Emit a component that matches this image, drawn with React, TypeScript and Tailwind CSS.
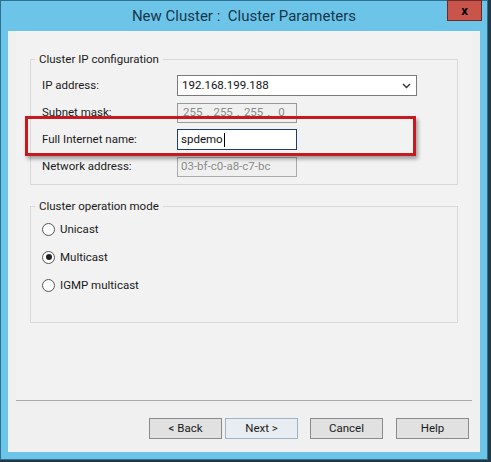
import React from 'react';

const font = { fontFamily: '"Segoe UI", Roboto, "Liberation Sans", sans-serif' };

function Field({ label, children }: { label: string; children: React.ReactNode }) {
  return (
    <div className="flex h-[27px] items-center">
      <span className="w-[135px] shrink-0 text-[11.5px] text-[#1a1a1a]">{label}</span>
      {children}
    </div>
  );
}

function Radio({ label, checked }: { label: string; checked?: boolean }) {
  return (
    <div className="flex h-[28px] items-center gap-[5px]">
      <span className="flex h-[13px] w-[13px] items-center justify-center rounded-full border border-[#555] bg-white">
        {checked && <span className="h-[6px] w-[6px] rounded-full bg-[#222]" />}
      </span>
      <span className="text-[11.5px] text-[#1a1a1a]">{label}</span>
    </div>
  );
}

function Btn({ label, focused }: { label: string; focused?: boolean }) {
  return (
    <button
      className={`h-[21px] w-[73px] border text-[11.5px] text-[#1a1a1a] ${
        focused ? 'border-[#9fb4c6] bg-[#e8edf2]' : 'border-[#8a8a8a] bg-[#e1e1e1]'
      }`}
    >
      {label}
    </button>
  );
}

export default function App() {
  return (
    <div style={font} className="h-[462px] w-[491px] bg-[#243845] pr-[3px] pb-[2px]">
      <div className="flex h-full flex-col border border-[#2f6f8f] bg-[#6cc4e9] px-[7px] pb-[7px]">
        {/* title bar */}
        <div className="relative flex h-[30px] shrink-0 items-center justify-center">
          <span className="text-[15px] text-[#17364a]">New Cluster :&nbsp; Cluster Parameters</span>
          <div className="absolute -top-px right-[-2px] flex h-[21px] w-[35px] items-center justify-center border border-[#6b2a24] bg-[#c9544a] text-[13px] font-bold text-black">
            x
          </div>
        </div>

        {/* client area */}
        <div className="flex flex-1 flex-col bg-[#f0f0f0]">
          <div className="mx-[8px] flex flex-col border-b border-[#a8a8a8] bg-[#f2f2f2] px-[14px] pt-[20px] pb-[77px]">
            <fieldset className="h-[134px] border border-[#d8d8d8] px-[11px]">
              <legend className="ml-[-7px] px-[4px] text-[11.5px] text-[#1a1a1a]">Cluster IP configuration</legend>
              <div className="mt-[4px] flex flex-col">
                <Field label="IP address:">
                  <div className="flex h-[21px] w-[240px] items-center justify-between border border-[#7a7a7a] bg-white pl-[4px] pr-[5px] text-[11.5px] text-[#111]">
                    <span>192.168.199.188</span>
                    <svg width="9" height="6" viewBox="0 0 9 6">
                      <path d="M1 1 L4.5 4.5 L8 1" fill="none" stroke="#333" strokeWidth="1.4" />
                    </svg>
                  </div>
                </Field>
                <Field label="Subnet mask:">
                  <div className="flex h-[20px] w-[120px] items-center gap-[4px] whitespace-nowrap border border-[#9a9a9a] bg-[#f0f0f0] pl-[5px] text-[11.5px] text-[#8a8a8a]">
                    <span>255</span>
                    <span>.</span>
                    <span>255</span>
                    <span>.</span>
                    <span>255</span>
                    <span>.</span>
                    <span className="ml-[4px]">0</span>
                  </div>
                </Field>
                <Field label="Full Internet name:">
                  <div className="flex h-[21px] w-[120px] items-center border border-[#1f3f66] bg-white pl-[3px] text-[11.5px] text-[#111]">
                    spdemo<span className="ml-px h-[14px] w-px bg-black" />
                  </div>
                </Field>
                <Field label="Network address:">
                  <div className="flex h-[20px] w-[120px] items-center border border-[#aaa] bg-[#f0f0f0] pl-[3px] text-[11.5px] text-[#8a8a8a]">
                    03-bf-c0-a8-c7-bc
                  </div>
                </Field>
              </div>
            </fieldset>

            <fieldset className="mt-[13px] h-[125px] border border-[#d8d8d8] px-[11px]">
              <legend className="ml-[-7px] px-[4px] text-[11.5px] text-[#1a1a1a]">Cluster operation mode</legend>
              <div className="flex flex-col">
                <Radio label="Unicast" />
                <Radio label="Multicast" checked />
                <Radio label="IGMP multicast" />
              </div>
            </fieldset>
          </div>

          {/* buttons */}
          <div className="flex flex-1 items-start justify-end pt-[17px] pr-[11px]">
            <div className="flex gap-[3px]">
              <Btn label="< Back" />
              <Btn label="Next >" focused />
            </div>
            <div className="ml-[12px] flex gap-[13px]">
              <Btn label="Cancel" />
              <Btn label="Help" />
            </div>
          </div>
        </div>
      </div>

      {/* red highlight annotation */}
      <div className="pointer-events-none absolute top-[116px] left-[25px] h-[40px] w-[391px] border-[3px] border-[#c41a20] shadow-[2px_3px_4px_rgba(0,0,0,0.35)]" />
    </div>
  );
}
